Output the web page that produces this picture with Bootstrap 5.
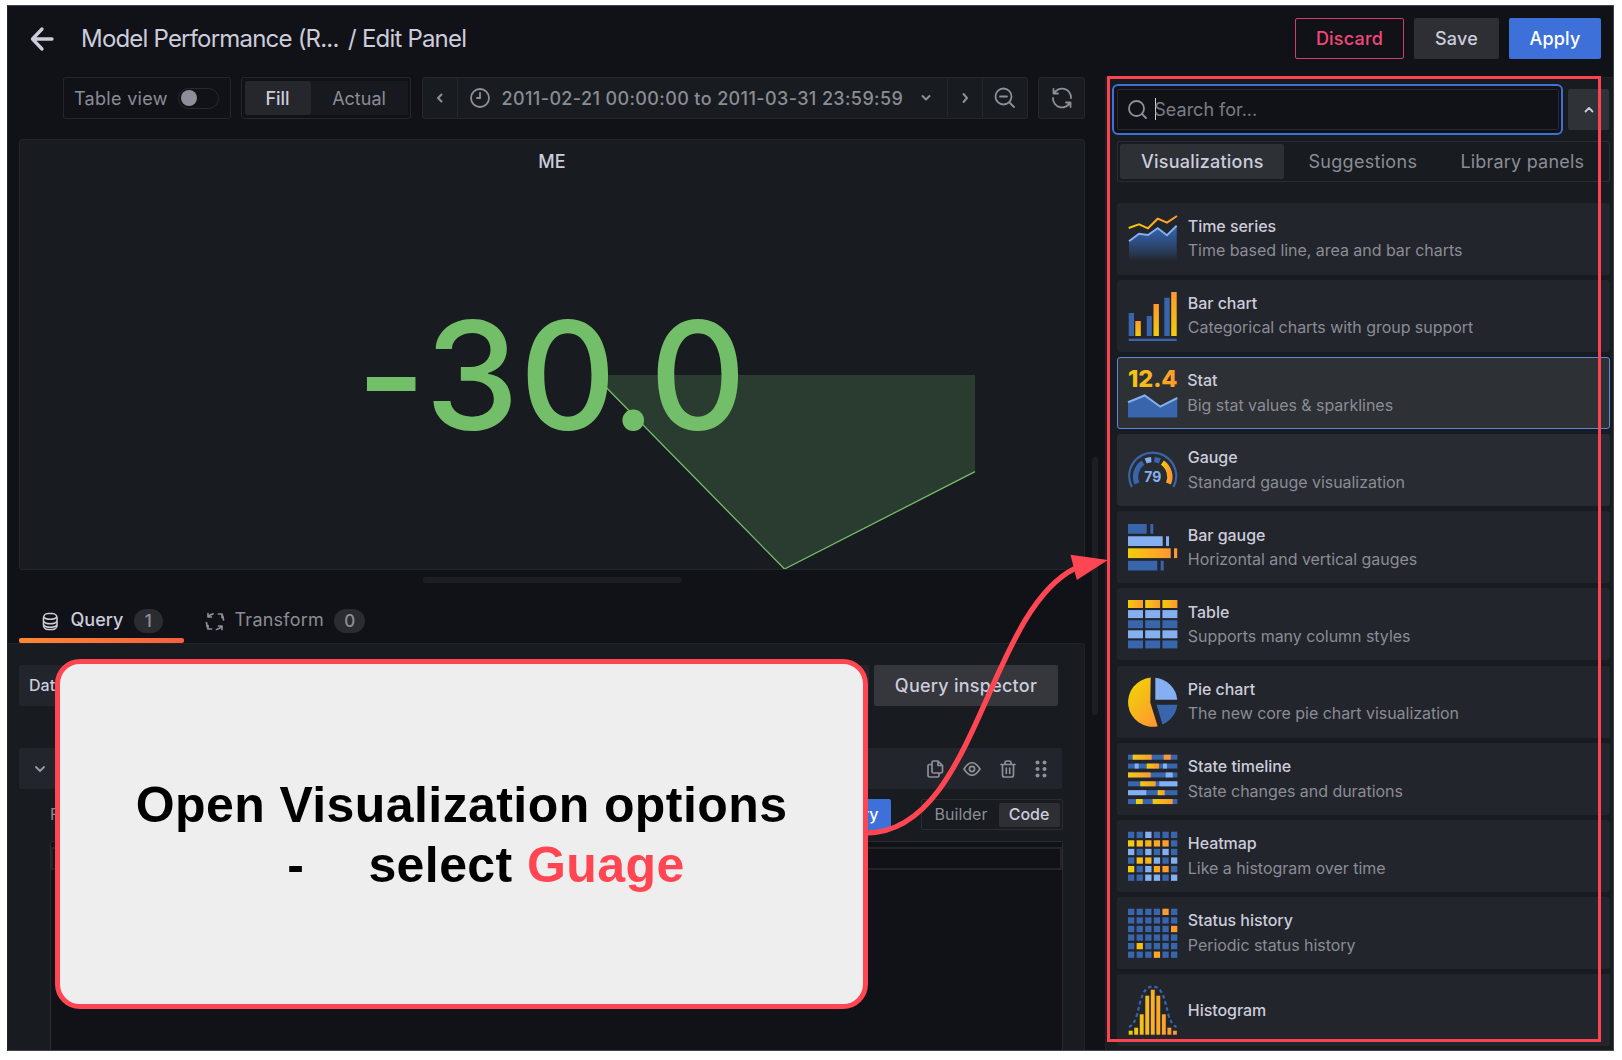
<!DOCTYPE html>
<html lang="en" data-bs-theme="dark">
<head>
<meta charset="utf-8">
<title>Edit Panel</title>
<link href="https://cdn.jsdelivr.net/npm/bootstrap@5.3.0/dist/css/bootstrap.min.css" rel="stylesheet">
<style>
body{background:#fff;font-family:Inter,"Liberation Sans",sans-serif;color:#ccccdc;width:1622px;height:1060px;overflow:hidden;font-size:18px;line-height:1.2}
svg{display:block;flex:none}
.frame{margin:5px 0 0 7px;width:1607px;height:1045.5px;background:#111217;border:1px solid #43454a;border-left-color:#222329;overflow:hidden}
.topbar{height:65px;padding:0 12px 0 22px}
.title{font-size:24px;margin-left:27px;white-space:pre;letter-spacing:-.8px;padding-top:2px}
.btn{--bs-btn-border-radius:2px;--bs-btn-font-size:18px;--bs-btn-font-weight:500;height:41.5px;padding:0;display:flex;align-items:center;justify-content:center;letter-spacing:.2px}
.btn-discard{width:109px;border:1.5px solid #d03d68;color:#f4467a}
.btn-save{width:85px;background:#2e2f34;color:#ccccdc}
.btn-apply{width:92px;background:#3d71d9;color:#fff}
.workarea{height:979px}
.leftcol{width:1098px;padding-top:6px}
.toolrow{padding-left:55px;height:42px}
.boxed{border:1.5px solid #26272d;border-radius:3px;height:42px}
.boxed span{padding-top:1px}
.muted{color:#8b8c96}
.tv{width:168px;padding-left:10px}
.toggle{width:41px;height:21px;border:1.5px solid #292a30;border-radius:11px;padding:1px 2px;margin-right:11px}
.toggle i{display:block;width:16px;height:16px;border-radius:8px;background:#8e8e9b}
.fa{width:170px;padding:2.5px;margin-left:10px}
.fa>div{height:34px;padding-top:2px}
.fa .on{width:66px;background:#26272c;border-radius:2px;color:#ccccdc;font-weight:500}
.fa .off{flex:1;background:#17191e}
.tg{margin-left:10.5px;width:606.5px;background:#181b1f}
.tg>div{height:39px;border-right:1.5px solid #24262b}
.tg>div:last-child{border:0}
.boxed .date{font-weight:500;letter-spacing:.38px;padding-top:2px}
.refresh{margin-left:10px;width:47px;background:#181b1f}
.viz{margin:20px 0 0 11px;width:1066px;height:431px;background:#181b1f;border:1.5px solid #222529;border-radius:3px;position:relative}
.viz h6{font-size:18px;font-weight:500;text-align:center;margin:11px 0 0;line-height:22px;color:#ccccdc}
.viz svg{position:absolute;left:-1px;top:-1px}
.splith{width:259px;height:6px;border-radius:3px;background:#1d1e23;margin:7px 0 0 415px}
.tabsrow{height:55px;margin-top:5px;padding-left:11px}
.tabq{width:164.5px;height:55px;padding:10px 0 0 22.5px;position:relative}
.tabq:after{content:"";position:absolute;left:0;bottom:0;width:164.5px;height:5px;border-radius:2px;background:linear-gradient(90deg,#ff8833,#f55f3e)}
.tabt{height:55px;padding:10px 0 0 21px}
.cnt{height:24px;border-radius:12px;background:#2b2c31;color:#8e8e99;font-weight:500;font-size:17px;display:flex;align-items:center;justify-content:center}
.qpane{background:#181b1f;border:1.5px solid #212328;border-left:0;width:1077px;height:408px;border-radius:0 3px 0 0;padding:20.5px 0 0 11px}
.fillbox{background:#22252b;border-radius:2px;height:41px}
.dbox{width:850px;padding:1px 0 0 10px;font-size:16px;font-weight:500}
.btn-insp{width:184px;background:#35373c;color:#ccccdc;letter-spacing:.25px}
.qrow{margin-top:42px;width:1043px;padding:0 15px 0 15px}
.orow{margin-top:10px;height:31px;width:1043.5px;font-size:16px;padding-left:31px}
.runq{background:#3d71d9;color:#fff;width:110px;height:31px;font-weight:500;border-radius:2px;padding-right:12px}
.bc{margin-left:30px;width:142px;height:31px;border:1.5px solid #2a2c31;border-radius:2px;padding:2px}
.bc .b1{width:75px}
.bc .b2{width:61px;height:24px;background:#2d2f34;border-radius:2px;font-weight:500}
.editor{margin:11px 0 0 31px;width:1013px;height:230px;background:#111217;border:1.5px solid #2b2c31;border-radius:2px;padding-top:5px}
.curline{height:23px;border:2px solid #232423}
.side{width:508px;margin-top:6px;background:#181b1f;border:1.5px solid #212328;border-right:0;height:980px;padding:6px 2px 0 6px}
.searchring{width:451px;height:51px;border:2.5px solid #3d71d9;border-radius:6px;padding:2.5px;background:#111217}
.search{height:41px;border:1px solid #292a2f;border-radius:2px;padding-left:10px;color:#7b7c86}
.search span{padding-top:1px}
.caret{width:1.5px;height:22px;background:#ccccdc;margin:0 -2px 0 8px}
.collapse-btn{width:41px;height:41px;background:#2f3237;border-radius:2px;margin-left:5px}
.modes{margin:5.5px 0 0 5px;width:493px;height:41px;border:1.5px solid #2a2c31;border-radius:2px;padding:2px}
.modes div{height:35px;padding-top:2px}
.modes .m1{width:164px;background:#2d3035;border-radius:2px;color:#ccccdc;font-weight:500;letter-spacing:.23px}
.vlist{margin:21px 0 0 5px;width:493px;display:flex;flex-direction:column;gap:5.2px}
.vcard{height:72px;flex:none;background:#22252b;border-radius:3px;padding-left:11px;gap:9.5px}
.vcard>div{padding-bottom:.5px}
.vcard svg{overflow:visible}
.vcard.hov{background:#282b31}
.vcard.sel{background:#2d3034;border:1.5px solid #5d87d8;padding-left:9.5px}
.vcard b{display:block;font-size:16px;font-weight:500;line-height:24.5px;letter-spacing:-.05px}
.vcard span{display:block;font-size:16px;line-height:24.5px;color:#8b8c96;letter-spacing:-.04px}
.redbox{position:absolute;left:1106.5px;top:75.5px;width:494.5px;height:966.5px;border:3px solid #fa4550}
.vscroll{position:absolute;left:1092px;top:457px;width:5.5px;height:258px;border-radius:3px;background:#1d1e23}
.arrow{position:absolute;left:0;top:0}
.callout{position:absolute;left:55px;top:658.5px;width:813px;height:350px;background:#eee;border:5px solid #ff4652;border-radius:25px;color:#000;font:bold 50px/60px "Liberation Sans",Arial,sans-serif;letter-spacing:.42px;text-align:center;padding-top:111px;white-space:pre}
.callout em{font-style:normal;color:#ff4652}
.pick{padding-left:49px}
.dash{display:inline-block;margin-right:64px}
</style>
<script src="https://cdn.jsdelivr.net/npm/bootstrap@5.3.0/dist/js/bootstrap.bundle.min.js"></script>
</head>
<body>
<svg width="0" height="0" class="position-absolute"><defs>
<linearGradient id="h" x1="0" x2="1" y1="0" y2="0"><stop stop-color="#f2cc0c"/><stop offset="1" stop-color="#ff9830"/></linearGradient>
<linearGradient id="hu" gradientUnits="userSpaceOnUse" x1="0" x2="50" y1="0" y2="0"><stop stop-color="#f2cc0c"/><stop offset="1" stop-color="#ff9830"/></linearGradient>
<linearGradient id="v" x1="0" x2="0" y1="0" y2="1"><stop stop-color="#ff9830"/><stop offset="1" stop-color="#f2cc0c"/></linearGradient>
<linearGradient id="pg" x1="0.2" x2="0.8" y1="0.2" y2="1"><stop stop-color="#f2cc0c"/><stop offset="1" stop-color="#ff9830"/></linearGradient>
<linearGradient id="ar" x1="0" x2="0" y1="0" y2="1"><stop stop-color="#3865ab"/><stop offset=".3" stop-color="#2f5593"/><stop offset="1" stop-color="#3865ab" stop-opacity="0"/></linearGradient>
</defs></svg>
<div class="frame">
 <header class="topbar d-flex align-items-center">
  <svg width="24" height="26" viewBox="0 0 24 26" fill="none" stroke="#ccccdc" stroke-width="3.3" stroke-linecap="round" stroke-linejoin="round"><path d="M12 3 2.5 13 12 23M3 13H22"/></svg>
  <div class="title">Model Performance (R...&nbsp;&thinsp;/ Edit Panel</div>
  <div class="d-flex ms-auto" style="gap:10px"><button class="btn btn-discard">Discard</button><button class="btn btn-save">Save</button><button class="btn btn-apply">Apply</button></div>
 </header>
 <div class="workarea d-flex">
  <main class="leftcol">
   <div class="toolrow d-flex">
    <div class="boxed tv d-flex align-items-center muted"><span style="letter-spacing:.3px">Table view</span><div class="toggle ms-auto"><i></i></div></div>
    <div class="boxed fa d-flex muted"><div class="on d-flex align-items-center justify-content-center">Fill</div><div class="off d-flex align-items-center justify-content-center">Actual</div></div>
    <div class="boxed tg d-flex muted">
     <div class="d-flex align-items-center justify-content-center" style="width:35px"><svg width="8" height="12" fill="none" stroke="#8e8f99" stroke-width="2" stroke-linecap="round" stroke-linejoin="round"><path d="M5.500 2.500 2 6 5.500 9.500"/></svg></div>
     <div class="d-flex align-items-center" style="width:490px;padding-left:12px">
      <svg width="20" height="20" fill="none" stroke="#8e8f99" stroke-width="1.8" stroke-linecap="round"><circle cx="10" cy="10" r="9"/><path d="M10 5V10H7"/></svg>
      <span class="date" style="margin-left:12px">2011-02-21 00:00:00 to 2011-03-31 23:59:59</span>
      <svg class="ms-auto" style="margin-right:15px" width="12" height="8" fill="none" stroke="#8e8f99" stroke-width="2" stroke-linecap="round" stroke-linejoin="round"><path d="M2.500 2 6 5.500 9.500 2"/></svg></div>
     <div class="d-flex align-items-center justify-content-center" style="width:35px"><svg width="8" height="12" fill="none" stroke="#8e8f99" stroke-width="2" stroke-linecap="round" stroke-linejoin="round"><path d="M2.500 2 6 6 2.500 10"/></svg></div>
     <div class="d-flex align-items-center justify-content-center flex-fill"><svg width="21" height="21" fill="none" stroke="#8e8f99" stroke-width="1.8" stroke-linecap="round"><circle cx="9.5" cy="9.5" r="8"/><path d="M6 9.5H13M15.5 15.5 20 20"/></svg></div>
    </div>
    <div class="boxed refresh d-flex align-items-center justify-content-center"><svg width="22" height="22" viewBox="0 0 22 22" fill="none" stroke="#8e8f99" stroke-width="1.8" stroke-linecap="round" stroke-linejoin="round"><path d="M2.500 2V6.500H7M3 6.500A9 9 0 0 1 20 11M19.500 20V15.500H15M19 15.500A9 9 0 0 1 2 11"/></svg></div>
   </div>
   <section class="viz"><h6>ME</h6>
    <svg width="1065" height="430" viewBox="19 139 1065 430"><path d="M594 375H975V471.700L784.500 569Z" fill="#2a3b2f"/><path d="M594 375 784.500 569 975 471.700" fill="none" stroke="#73bf69" stroke-width="1.300"/><text y="429.500" x="356.500 425 519.500 610.500 649.500" font-size="150" font-weight="500" fill="#73bf69">-30.0</text></svg>
   </section>
   <div class="splith"></div>
   <div class="tabsrow d-flex">
    <div class="tabq d-flex align-items-start">
     <svg style="margin-top:14px" width="17" height="19" viewBox="0 0 17 19" fill="none" stroke="#ccccdc" stroke-width="1.600"><rect x="1.500" y="1.500" width="13.500" height="16" rx="4.500"/><path d="M1.500 5C4 8 12.500 8 15 5M1.500 9.500C4 12.500 12.500 12.500 15 9.500M1.500 13C4 16 12.500 16 15 13"/></svg>
     <span style="margin:11px 0 0 12px;font-weight:500">Query</span><div class="cnt" style="width:29px;margin:11px 0 0 10.500px">1</div></div>
    <div class="tabt d-flex align-items-start muted">
     <svg style="margin-top:14px" width="20" height="19" viewBox="0 0 20 19" fill="none" stroke="#8e8f99" stroke-width="1.700" stroke-linecap="round" stroke-linejoin="round"><path d="M3 1.500V5H6.500M3.500 4.500Q5 2.500 8 1.800M13.500 2H17V5.500M17 2.500Q18.300 5 18.500 8M17 17.500V14H13.500M16.500 14.500Q14.500 17 11.500 17.500M6.500 17H3V13.500M3 16.500Q1.500 13.500 1.500 10.500"/></svg>
     <span style="margin:11px 0 0 10px;letter-spacing:.25px">Transform</span><div class="cnt" style="width:31px;margin:11px 0 0 10px">0</div></div>
   </div>
   <section class="qpane">
    <div class="d-flex" style="gap:5px"><div class="fillbox dbox d-flex align-items-center">Data source</div><button class="btn btn-insp">Query inspector</button></div>
    <div class="fillbox qrow d-flex align-items-center">
     <svg width="12" height="8" fill="none" stroke="#9b9ca6" stroke-width="1.800" stroke-linecap="round" stroke-linejoin="round"><path d="M2 2 6 6 10 2"/></svg>
     <div class="d-flex align-items-center ms-auto" style="gap:19px">
      <svg width="17" height="18" viewBox="0 0 17 18" fill="none" stroke="#8e8f99" stroke-width="1.700" stroke-linejoin="round"><path d="M6.500 1H11L15.500 5.500V11.500Q15.500 13 14 13H6.500Q5 13 5 11.500V2.500Q5 1 6.500 1ZM11 1V5.500H15.500M5 4.500H2.500Q1 4.500 1 6V15.500Q1 17 2.500 17H10.500Q12 17 12 15.500V13"/></svg>
      <svg width="18" height="14" viewBox="0 0 18 14" fill="none" stroke="#8e8f99" stroke-width="1.700"><path d="M1 7Q9-5.500 17 7Q9 19.500 1 7Z"/><circle cx="9" cy="7" r="2.600"/></svg>
      <svg width="16" height="18" viewBox="0 0 16 18" fill="none" stroke="#8e8f99" stroke-width="1.700" stroke-linecap="round"><path d="M1 4.500H15M2.500 4.500V15Q2.500 17 4.500 17H11.500Q13.500 17 13.500 15V4.500M5 4V3Q5 1 7 1H9Q11 1 11 3V4M6.300 8V13.500M9.700 8V13.500"/></svg>
      <svg width="12" height="18" fill="#8e8f99"><circle cx="2.500" cy="2.500" r="2"/><circle cx="9.500" cy="2.500" r="2"/><circle cx="2.500" cy="9" r="2"/><circle cx="9.500" cy="9" r="2"/><circle cx="2.500" cy="15.500" r="2"/><circle cx="9.500" cy="15.500" r="2"/></svg>
     </div>
    </div>
    <div class="orow d-flex align-items-center muted"><span>Format</span><div class="runq ms-auto d-flex align-items-center justify-content-end">Run query</div>
     <div class="bc d-flex align-items-center"><div class="b1 text-center">Builder</div><div class="b2 d-flex align-items-center justify-content-center" style="color:#ccccdc">Code</div></div></div>
    <div class="editor"><div class="curline"></div></div>
   </section>
  </main>
  <aside class="side">
   <div class="d-flex align-items-center">
    <div class="searchring"><div class="search d-flex align-items-center"><svg width="19" height="19" fill="none" stroke="#8e8f99" stroke-width="1.800" stroke-linecap="round"><circle cx="8.500" cy="8.500" r="7.500"/><path d="M14 14 18 18"/></svg><i class="caret"></i><span>Search for...</span></div></div>
    <div class="collapse-btn d-flex align-items-center justify-content-center"><svg width="12" height="8" fill="none" stroke="#ccccdc" stroke-width="1.800" stroke-linecap="round" stroke-linejoin="round"><path d="M2.500 5.500 6 2 9.500 5.500"/></svg></div>
   </div>
   <div class="modes d-flex muted"><div class="m1 d-flex align-items-center justify-content-center">Visualizations</div><div class="d-flex align-items-center justify-content-center" style="width:157px;letter-spacing:.3px">Suggestions</div><div class="d-flex align-items-center justify-content-center flex-fill pe-1" style="letter-spacing:.2px">Library panels</div></div>
   <div class="vlist">
    <div class="vcard d-flex align-items-center"><svg width="50" height="50" fill="none" stroke-width="2"><path d="M1 27.300 11 19.700 20 21 29.700 14.300 39 21.300 48.700 11.700V47H1Z" fill="url(#ar)"/><path d="M.7 14 11 10.300 20 14.300 29.700 4.700 39 8.700 49 2" stroke="url(#hu)"/><path d="M1 27.300 11 19.700 20 21 29.700 14.300 39 21.300 48.700 11.700" stroke="#84aff1"/></svg><div><b>Time series</b><span>Time based line, area and bar charts</span></div></div>
    <div class="vcard d-flex align-items-center"><svg width="50" height="50" fill="#3865ab"><path d="M.7 22H6V45H.7ZM18.700 25H23.800V45H18.700ZM36.300 6.700H41.700V45H36.300ZM.7 47.700H48.700V50H.7Z"/><g fill="url(#v)"><rect x="7.300" y="30" width="5.500" height="15"/><rect x="25.500" y="13" width="5.400" height="32"/><rect x="43.200" y="1" width="5.500" height="44"/></g></svg><div><b>Bar chart</b><span>Categorical charts with group support</span></div></div>
    <div class="vcard sel d-flex align-items-center"><svg width="50" height="50"><text x="0" y="19" font-size="23.500" font-weight="800" textLength="49.500" fill="url(#hu)">12.4</text><path d="M0 34.300 16.700 27.500 32.300 38.700 49.300 30V49.500H0Z" fill="#3865ab"/><path d="M0 34.300 16.700 27.500 32.300 38.700 49.300 30" fill="none" stroke="#84aff1" stroke-width="2"/></svg><div><b>Stat</b><span>Big stat values &amp; sparklines</span></div></div>
    <div class="vcard hov d-flex align-items-center"><svg width="50" height="50" fill="none" stroke="#3865ab" stroke-width="5.300"><path d="M3.900 42A23.500 23.500 0 1 1 45.500 42" stroke-width="2.200"/><path d="M8.900 38.500A17.200 17.200 0 0 1 15 17.600"/><path d="M17.700 16A17.200 17.200 0 0 1 23.300 14.600" stroke="#84aff1"/><path d="M26.300 14.600A17.200 17.200 0 0 1 31.800 16"/><path d="M34.400 17.600A17.200 17.200 0 0 1 40.500 38.500" stroke="url(#h)"/><text x="24.700" y="36.700" text-anchor="middle" font-size="14" font-weight="700" stroke="none" fill="#84aff1">79</text></svg><div><b>Gauge</b><span>Standard gauge visualization</span></div></div>
    <div class="vcard d-flex align-items-center"><svg width="50" height="50" fill="#3865ab"><path d="M0 2H18.700V11.700H0ZM22.300 2H25.300V11.700H22.300ZM0 38.700H29.300V48.500H0ZM32.700 38.700H35.700V48.500H32.700Z"/><path d="M0 14.200H34.700V24H0ZM38 14.200H41V24H38Z" fill="#84aff1"/><rect y="26.300" width="42.700" height="9.800" fill="url(#h)"/><rect x="46" y="26.300" width="3.200" height="9.800" fill="#ff9830"/></svg><div><b>Bar gauge</b><span>Horizontal and vertical gauges</span></div></div>
    <div class="vcard d-flex align-items-center"><svg id="tbl" width="50" height="50"></svg><div><b>Table</b><span>Supports many column styles</span></div></div>
    <div class="vcard d-flex align-items-center"><svg width="50" height="50"><path d="M22.700.6A24.600 24.600 0 1 0 29.700 49.200L22.300 25.700Z" fill="url(#pg)"/><path d="M27.300.8A24.500 24.500 0 0 1 49.300 22.700H27.300Z" fill="#84aff1"/><path d="M28.500 27.700H49.300A24.500 24.500 0 0 1 34.500 47.500Z" fill="#3865ab"/></svg><div><b>Pie chart</b><span>The new core pie chart visualization</span></div></div>
    <div class="vcard d-flex align-items-center"><svg id="stl" width="50" height="50"></svg><div><b>State timeline</b><span>State changes and durations</span></div></div>
    <div class="vcard d-flex align-items-center"><svg id="heat" width="50" height="50"></svg><div><b>Heatmap</b><span>Like a histogram over time</span></div></div>
    <div class="vcard d-flex align-items-center"><svg id="hist" width="50" height="50"></svg><div><b>Status history</b><span>Periodic status history</span></div></div>
    <div class="vcard d-flex align-items-center"><svg width="50" height="50"><path d="M1 42Q6 40 9 30C13 14 15 1.500 24.700 1.500S36.500 14 40.500 30Q43.500 40 48.500 42" fill="none" stroke="#3865ab" stroke-width="2.200" stroke-dasharray="3.600 2.800"/><g id="bars"></g></svg><div><b>Histogram</b></div></div>
   </div>
  </aside>
 </div>
</div>
<div class="vscroll"></div>
<div class="redbox"></div>
<svg class="arrow" width="1622" height="1060"><path d="M866 833C976 833 986.800 612.700 1074.600 568.600" fill="none" stroke="#ff4652" stroke-width="5.300"/><path d="M1070.500 554.700 1108 560 1076.800 580Z" fill="#ff4652"/></svg>
<div class="callout"><div>Open Visualization options</div><div class="pick"><span class="dash">-</span>select <em>Guage</em></div></div>
<script>
const D='#3865ab',L='#84aff1',Y='#f2cc0c',O='#ff9830',G='url(#h)';
const r=(x,y,w,h,f)=>`<rect x="${x}" y="${y}" width="${w}" height="${h}" fill="${f}"/>`;
const put=(id,s)=>document.getElementById(id).innerHTML=s;
put('tbl',[G,L,D,L,D].map((c,j)=>[0,17.2,34.4].map(x=>r(x,1+j*10.1,15,8,c)).join('')).join(''));
const tl=[[[4.7,23.7,G],[35.7,42.7,O]],[[6.7,10.7,L],[18.7,31,G],[35,39,L]],[[0,22.7,G],[37.7,44.7,L]],[[12.3,27.7,G],[31.3,49.4,L]],[[0,18.3,L],[29.7,36.7,G]],[[8,14.7,Y],[24.7,44.7,G]]];
put('stl',tl.map((row,j)=>r(0,.7+j*8.87,49.4,5,D)+row.map(s=>r(s[0],.7+j*8.87,s[1]-s[0],5,s[2])).join('')).join(''));
const mix=i=>['#f4c911','#f7bf18','#fab31f','#fca727','#ff9c2e','#ff9830'][i];
const cells=m=>m.map((row,j)=>[...row].map((c,i)=>r(i*8.6,.7+j*8.57,6.3,6.3,c=='D'?D:c=='L'?L:mix(i))).join('')).join('');
put('heat',cells(['DDLDDD','XXXXXD','LDLDLD','DXXLDL','XDLXXD','DDLLDL']));
put('hist',cells(['DDDDXD','DDDDDD','DDDDDX','DDDDDD','DXDDDD','DDDXDD']));
put('bars',[45.7,42.7,29.3,10.7,4.7,10.7,29.3,42.7,45.7].map((y,i)=>r(.7+i*5.53,y,3.9,49.7-y,['#f2cc0c','#f4c611','#f6bf17','#f8b91c','#faaf24','#fbab26','#fda22b','#fe9d2e','#ff9830'][i])).join(''));
</script>
</body>
</html>
